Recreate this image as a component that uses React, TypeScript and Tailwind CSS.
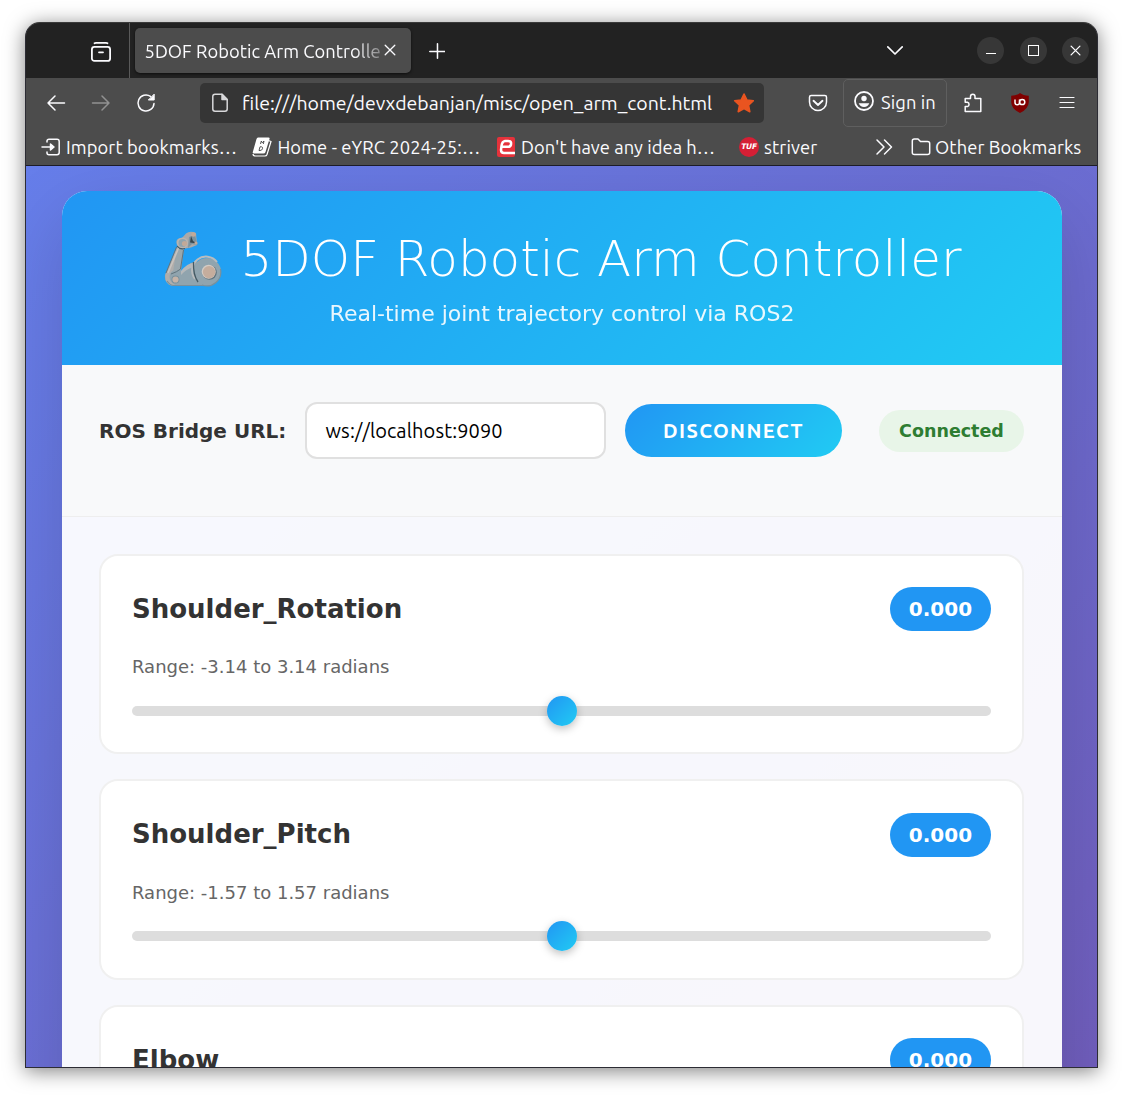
import React from "react";

const UI = "font-['Ubuntu','Noto_Sans',sans-serif]";

function Svg({ size = 20, className = "", children }: { size?: number; className?: string; children: React.ReactNode }) {
  return (
    <svg
      width={size}
      height={size}
      viewBox="0 0 20 20"
      fill="none"
      stroke="currentColor"
      strokeWidth="1.5"
      strokeLinecap="round"
      strokeLinejoin="round"
      className={`shrink-0 ${className}`}
    >
      {children}
    </svg>
  );
}

function RoboticArm() {
  return (
    <svg width="58" height="56" viewBox="0 0 58 56" className="shrink-0">
      <path d="M15 16 L20 18 L17 40 L27 32 L33 30 L48 54 L8 54.500 Q0 52 1 44 Z" fill="#90a4ae" />
      <path d="M13 16 L1.500 43 Q0 52 7 54.500 L11 54 Q4 50 6 43 Q9 38 15 39 L18 19 Z" fill="#b0aeac" />
      <path d="M13 16 L19 19 L16 38 Q12 40 9 41 Z" fill="#9aa7ad" />
      <path d="M12.500 16 L2 42 M19.500 19 L16.500 38 Q13 41 7 43" fill="none" stroke="#62747d" strokeWidth="1" />
      <path d="M14.500 17 L4 42" stroke="#c9c3be" strokeWidth="1.600" />
      <path d="M17 40 Q24 31 31 32 L30 36 Q22 38 17 44 Z" fill="#b5b8ba" />
      <path d="M3 50 Q6 54.500 10 54.500 L42 54.500" fill="none" stroke="#78909c" strokeWidth="1.200" />
      <path d="M12.500 10 Q13 7 18 7 L22 2.500 Q26 -0.500 32 2 L33 14 L27 16.500 L18 18 Q11.500 15 12.500 10 Z" fill="#aaa9a8" />
      <path d="M25 6 L31 4 L33.500 14 L28 13 L24 17 Z" fill="#7c939f" />
      <path d="M27 5 L29 10 L33 12.500 L26 11.500 Z" fill="#37474f" />
      <circle cx="18.500" cy="12" r="4.800" fill="#90a4ae" stroke="#b9b4b0" strokeWidth="1.600" />
      <path d="M13 15 Q16 19 21 17.500" fill="none" stroke="#455a64" strokeWidth="1.200" />
      <circle cx="20.500" cy="12.500" r="2.600" fill="#c2a998" />
      <circle cx="29.500" cy="3.500" r="2.200" fill="#c2a998" />
      <circle cx="32" cy="12" r="1.600" fill="#c2a998" />
      <circle cx="43" cy="41" r="14" fill="#90a4ae" />
      <path d="M31 48 A13.500 13.500 0 0 1 53 31" fill="none" stroke="#b9bcbe" strokeWidth="2" />
      <path d="M29.500 31 Q29 44 34 51" fill="none" stroke="#455a64" strokeWidth="1.300" />
      <path d="M38 54 A14 14 0 0 0 56.500 38" fill="none" stroke="#78909c" strokeWidth="1.200" />
      <circle cx="45.500" cy="41.500" r="7.300" fill="#62747d" />
      <circle cx="44.700" cy="40.700" r="7" fill="#d5ccc5" />
      <circle cx="45.100" cy="41.100" r="6.200" fill="#c5ad9d" />
      <circle cx="11.500" cy="48.500" r="4" fill="#78909c" />
      <circle cx="11.500" cy="48.500" r="3.100" fill="#c5b3a7" />
    </svg>
  );
}

function TabStrip() {
  return (
    <div className="flex h-[55px] items-center bg-[#222222] text-[#fbfbfe]">
      <div className="flex h-full w-[104px] items-center justify-end border-r border-[#5a5a5a] pr-[18px]">
        <Svg size={20} className="mt-0.5">
          <rect x="0.9" y="4.900" width="18.200" height="14" rx="2.500" strokeWidth="1.8" />
          <path d="M3.500 1.300 Q4 0.900 5 0.900 H15 Q16 0.900 16.500 1.300" strokeWidth="1.8" />
          <path d="M8 10.300 H12" strokeWidth="1.8" />
        </Svg>
      </div>
      <div className="ml-[5px] flex h-[45px] w-[276px] items-center rounded-[5px] bg-[#4c4c4c] pl-[9.5px] shadow-[0_1px_3px_rgba(0,0,0,0.6)]">
        <span className="mt-0.5 w-[237px] text-[18.33px] tracking-[0.04px] whitespace-nowrap [mask-image:linear-gradient(to_right,black_88%,rgba(0,0,0,0.3))]">
          5DOF Robotic Arm Controlle
        </span>
        <Svg size={12} className="ml-[2.5px] -mt-0.5">
          <path d="M2 2 L18 18 M18 2 L2 18" strokeWidth="2.2" />
        </Svg>
      </div>
      <Svg size={16} className="ml-[18px] mt-px">
        <path d="M10.600 1 V19 M1 10.600 H20" strokeWidth="1.9" />
      </Svg>
      <Svg size={16} className="ml-[442px] -mt-0.5">
        <path d="M1 6 L10 15 L19 6" strokeWidth="2.1" />
      </Svg>
      <div className="ml-[74px] flex gap-4">
        <span className="flex size-[27px] items-center justify-center rounded-full bg-[#373737]">
          <span className="mt-[5px] h-px w-2.5 bg-white" />
        </span>
        <span className="flex size-[27px] items-center justify-center rounded-full bg-[#373737]">
          <span className="size-[11px] border border-white" />
        </span>
        <span className="-ml-px flex size-[27px] items-center justify-center rounded-full bg-[#373737]">
          <Svg size={11}>
            <path d="M2 2 L18 18 M18 2 L2 18" strokeWidth="2.4" />
          </Svg>
        </span>
      </div>
    </div>
  );
}

function NavBar() {
  return (
    <div className="flex h-[50px] items-center text-[#fbfbfe]">
      <Svg className="ml-5">
        <path d="M18.500 10 H2 M9 3 L2 10 L9 17" />
      </Svg>
      <Svg className="ml-[25px] text-[#919191]">
        <path d="M1.500 10 H18 M11 3 L18 10 L11 17" />
      </Svg>
      <Svg className="ml-[25px]">
        <path d="M18 10.500 A8 8 0 1 1 14.500 3.400" />
        <path d="M18.200 1.500 V7 H12.700 Z" fill="currentColor" strokeWidth="1" />
      </Svg>
      <div className="ml-11 flex h-10 w-[564px] items-center rounded-[5px] bg-[#353535] pl-2.5">
        <Svg className="text-[#d8d8da]">
          <path d="M12 1.300 H5 Q2.800 1.300 2.800 3.500 V16 Q2.800 18.200 5 18.200 H15 Q17.200 18.200 17.200 16 V6.500 Z" />
          <path d="M12 1.300 V6.500 H17.200 Z" fill="currentColor" />
        </Svg>
        <span className="mt-0.5 ml-3 w-[471px] text-[19.5px] whitespace-nowrap">
          file:///home/devxdebanjan/misc/open_arm_cont.html
        </span>
        <Svg size={21} className="ml-5 text-[#e95420]">
          <path d="M10.500 1 L13.200 6.600 L19.400 7.400 L14.800 11.600 L16 17.800 L10.500 14.800 L5 17.800 L6.200 11.600 L1.600 7.400 L7.800 6.600 Z" fill="currentColor" />
        </Svg>
      </div>
      <Svg className="ml-11">
        <path d="M3.200 2.500 H16.800 Q18.500 2.500 18.500 4.200 V9 A8.500 8.500 0 0 1 1.500 9 V4.200 Q1.500 2.500 3.200 2.500 Z" />
        <path d="M5.500 7.800 L10 12 L14.500 7.800" strokeWidth="1.9" />
      </Svg>
      <div className="ml-[15px] flex h-12 w-[104px] items-center rounded-[5px] border border-[#5f5f5f] pl-2.5">
        <Svg className="-mt-1">
          <circle cx="10" cy="10" r="9" strokeWidth="1.8" />
          <circle cx="10" cy="7.500" r="2.700" fill="currentColor" stroke="none" />
          <path d="M4.700 12.300 H15.300 Q14 16 10 16 Q6 16 4.700 12.300 Z" fill="currentColor" stroke="none" />
        </Svg>
        <span className="ml-[7px] w-14 text-[18.33px] tracking-[0.1px] whitespace-nowrap">Sign in</span>
      </div>
      <Svg className="ml-4">
        <path d="M2.200 18.500 V13.500 H4.500 A2.200 2.200 0 0 0 4.500 9.300 H2.200 V5.500 H7.500 V3.500 A2.200 2.200 0 0 1 12 3.500 V5.500 H17.800 V18.500 Z" />
      </Svg>
      <svg width="20" height="20" viewBox="0 0 20 20" className="ml-[27px] shrink-0">
        <path d="M10 0 Q13 2.500 18.800 2.800 V9 Q18.500 16 10 20 Q1.500 16 1.200 9 V2.800 Q7 2.500 10 0 Z" fill="#800000" />
        <path d="M5 6.500 V9.500 A2.200 2.200 0 0 0 9.500 9.500 V6.500" fill="none" stroke="#fff" strokeWidth="1.500" />
        <circle cx="12.200" cy="9" r="2.600" fill="none" stroke="#fff" strokeWidth="1.500" />
      </svg>
      <Svg className="ml-[27px]">
        <path d="M3 4.500 H17 M3 9.500 H17 M3 14.500 H17" strokeWidth="1.2" />
      </Svg>
    </div>
  );
}

function BookmarksBar() {
  return (
    <div className="flex h-[37px] items-center pt-px text-[18.33px] tracking-[0.1px] whitespace-nowrap text-[#fbfbfe]">
      <Svg className="ml-[15px]">
        <path d="M1 10 H12 M9.500 7 L13 10 L9.500 13 Z" fill="currentColor" />
        <path d="M6 5 V4 Q6 2.300 8 2.300 H16 Q18.200 2.300 18.200 4.500 V15.500 Q18.200 17.700 16 17.700 H8 Q6 17.700 6 16 V15" />
      </Svg>
      <span className="mt-px ml-[5px] w-[172px]">Import bookmarks…</span>
      <svg width="20" height="20" viewBox="0 0 20 20" className="ml-3.5 shrink-0">
        <path d="M16.500 3.500 L19 4.500 L15 17.500 Q14.500 19 13 19 H3.500 Q1 19 1 17" fill="none" stroke="#fff" strokeWidth="1.200" />
        <path d="M6 0.500 H16.500 Q18 0.500 17.500 2 L13.500 15 Q13 16.500 11.500 16.500 H2 Q0.300 16.500 0.800 15 L4.500 2 Q5 0.500 6 0.500 Z" fill="#fff" />
        <path d="M8.500 7 L9.300 4 L10.300 5.800 L12 4 L11.300 7 M7 13.500 L8 9.800 H9.500 Q11 10 10.500 11.700 Q10 13.500 8 13.500 Z" fill="none" stroke="#444" strokeWidth="0.900" />
      </svg>
      <span className="mt-px ml-[5.5px] w-[201.5px]">Home - eYRC 2024-25:…</span>
      <svg width="18" height="20" viewBox="0 0 18 20" className="ml-[18px] shrink-0">
        <rect width="18" height="20" rx="2" fill="#e5323b" />
        <path d="M3.500 9.800 H12 Q14.500 9 14 5.500 Q13.500 4 11 4 H8 Q5 4.500 4.500 9 L4 13 Q4 16 7 16 H18" fill="none" stroke="#fff" strokeWidth="2.500" />
      </svg>
      <span className="mt-px ml-[6px] w-[194px] tracking-[0.05px]">Don't have any idea h…</span>
      <span className="ml-6 flex size-5 items-center justify-center rounded-full bg-[#d51f35] font-['DejaVu_Sans',sans-serif] text-[7.5px] font-bold tracking-[-0.2px] text-white italic">
        TUF
      </span>
      <span className="mt-px ml-[5px] w-[54px]">striver</span>
      <Svg className="ml-14">
        <path d="M3 3 L10 10 L3 17 M10.500 3 L17.500 10 L10.500 17" />
      </Svg>
      <Svg className="ml-[17px]">
        <path d="M1.300 15.500 V4 Q1.300 2 3.300 2 H7 L9.500 4.500 H16.500 Q18.700 4.500 18.700 6.500 V15.500 Q18.700 17.500 16.500 17.500 H3.500 Q1.300 17.500 1.300 15.500 Z" />
      </Svg>
      <span className="mt-px ml-1 w-[147px]">Other Bookmarks</span>
    </div>
  );
}

function ConnectionPanel() {
  return (
    <div className="flex h-[152px] items-start border-b border-[#eeeeee] bg-[#f8f9fa] pt-[37px] pl-[37px]">
      <div className="flex items-center">
        <label className="w-[206px] text-[20px] font-bold whitespace-nowrap text-[#333333]">ROS Bridge URL:</label>
        <div className={`flex h-[57px] w-[301px] items-center rounded-xl border-2 border-[#e0e0e0] bg-white pl-[18.5px] text-[20px] tracking-[0.1px] text-black ${UI}`}>
          ws://localhost:9090
        </div>
        <button className={`ml-[19px] h-[53px] w-[217px] rounded-full bg-[linear-gradient(135deg,#2196f3,#21cbf3)] pt-px text-[20px] font-bold tracking-[1.4px] text-white ${UI}`}>
          DISCONNECT
        </button>
        <span className="ml-[37px] flex h-[42px] w-[145px] items-center justify-center rounded-full bg-[#e8f5e8] pt-px text-[17.5px] font-bold text-[#2e7d32]">
          Connected
        </span>
      </div>
    </div>
  );
}

function JointCard({ name, limit }: { name: string; limit: string }) {
  return (
    <div className="h-[200.4px] shrink-0 rounded-[19px] border-2 border-[#f0f0f0] bg-white px-[31px] pt-[31.2px]">
      <div className="flex h-11 items-center justify-between">
        <h3 className="pt-[0.5px] text-[26px] font-bold text-[#333333]">{name}</h3>
        <span className="flex h-11 w-[101px] items-center justify-center rounded-full bg-[#2196f3] text-[20px] font-bold text-white">
          0.000
        </span>
      </div>
      <p className="mt-[25px] text-[18px] leading-[22px] text-[#666666]">
        Range: -{limit} to {limit} radians
      </p>
      <div className="mt-[17.8px] flex h-[30px] items-center">
        <div className="flex h-2.5 w-full items-center justify-center rounded-full bg-[#dddddd]">
          <span className="size-[30px] shrink-0 rounded-full bg-[linear-gradient(135deg,#2196f3,#21cbf3)] shadow-[0_3px_8px_rgba(0,0,0,0.25)]" />
        </div>
      </div>
    </div>
  );
}

const joints = [
  { name: "Shoulder_Rotation", limit: "3.14" },
  { name: "Shoulder_Pitch", limit: "1.57" },
  { name: "Elbow", limit: "1.57" },
];

export default function App() {
  return (
    <div className="h-[1096px] w-[1123px] overflow-hidden bg-white pt-[22px] pl-[25px]">
      <div className="flex h-[1046px] w-[1073px] flex-col overflow-hidden rounded-t-[15px] border border-[#2c2c34] border-t-[#3a3a3a] bg-[#4c4c4c] shadow-[0_3px_20px_rgba(0,0,0,0.5)]">
        <div className={`shrink-0 border-b border-[#1c1c28] ${UI}`}>
          <TabStrip />
          <NavBar />
          <BookmarksBar />
        </div>
        <div className="h-[901px] shrink-0 overflow-hidden bg-[linear-gradient(135deg,#667eea,#764ba2)] bg-[length:1071px_2060px] pt-[25px] pl-9 font-['DejaVu_Sans',sans-serif]">
          <div className="h-[1400px] w-[1000px] overflow-hidden rounded-[25px] bg-white/95 shadow-[0_25px_75px_rgba(0,0,0,0.15)]">
            <header className="flex h-[174px] flex-col items-center bg-[linear-gradient(135deg,#2196f3,#21cbf3)] pt-[38px] text-white">
              <div className="flex h-[60px] items-center gap-[18px] pl-[2px]">
                <RoboticArm />
                <h1 className="text-[50px] font-extralight whitespace-nowrap">5DOF Robotic Arm Controller</h1>
              </div>
              <p className="mt-[9px] text-[22px] leading-8 opacity-90">Real-time joint trajectory control via ROS2</p>
            </header>
            <ConnectionPanel />
            <div className="flex flex-col gap-[25px] pt-[37px] pr-[38px] pl-[37px]">
              {joints.map((joint) => (
                <JointCard key={joint.name} name={joint.name} limit={joint.limit} />
              ))}
            </div>
          </div>
        </div>
      </div>
    </div>
  );
}
